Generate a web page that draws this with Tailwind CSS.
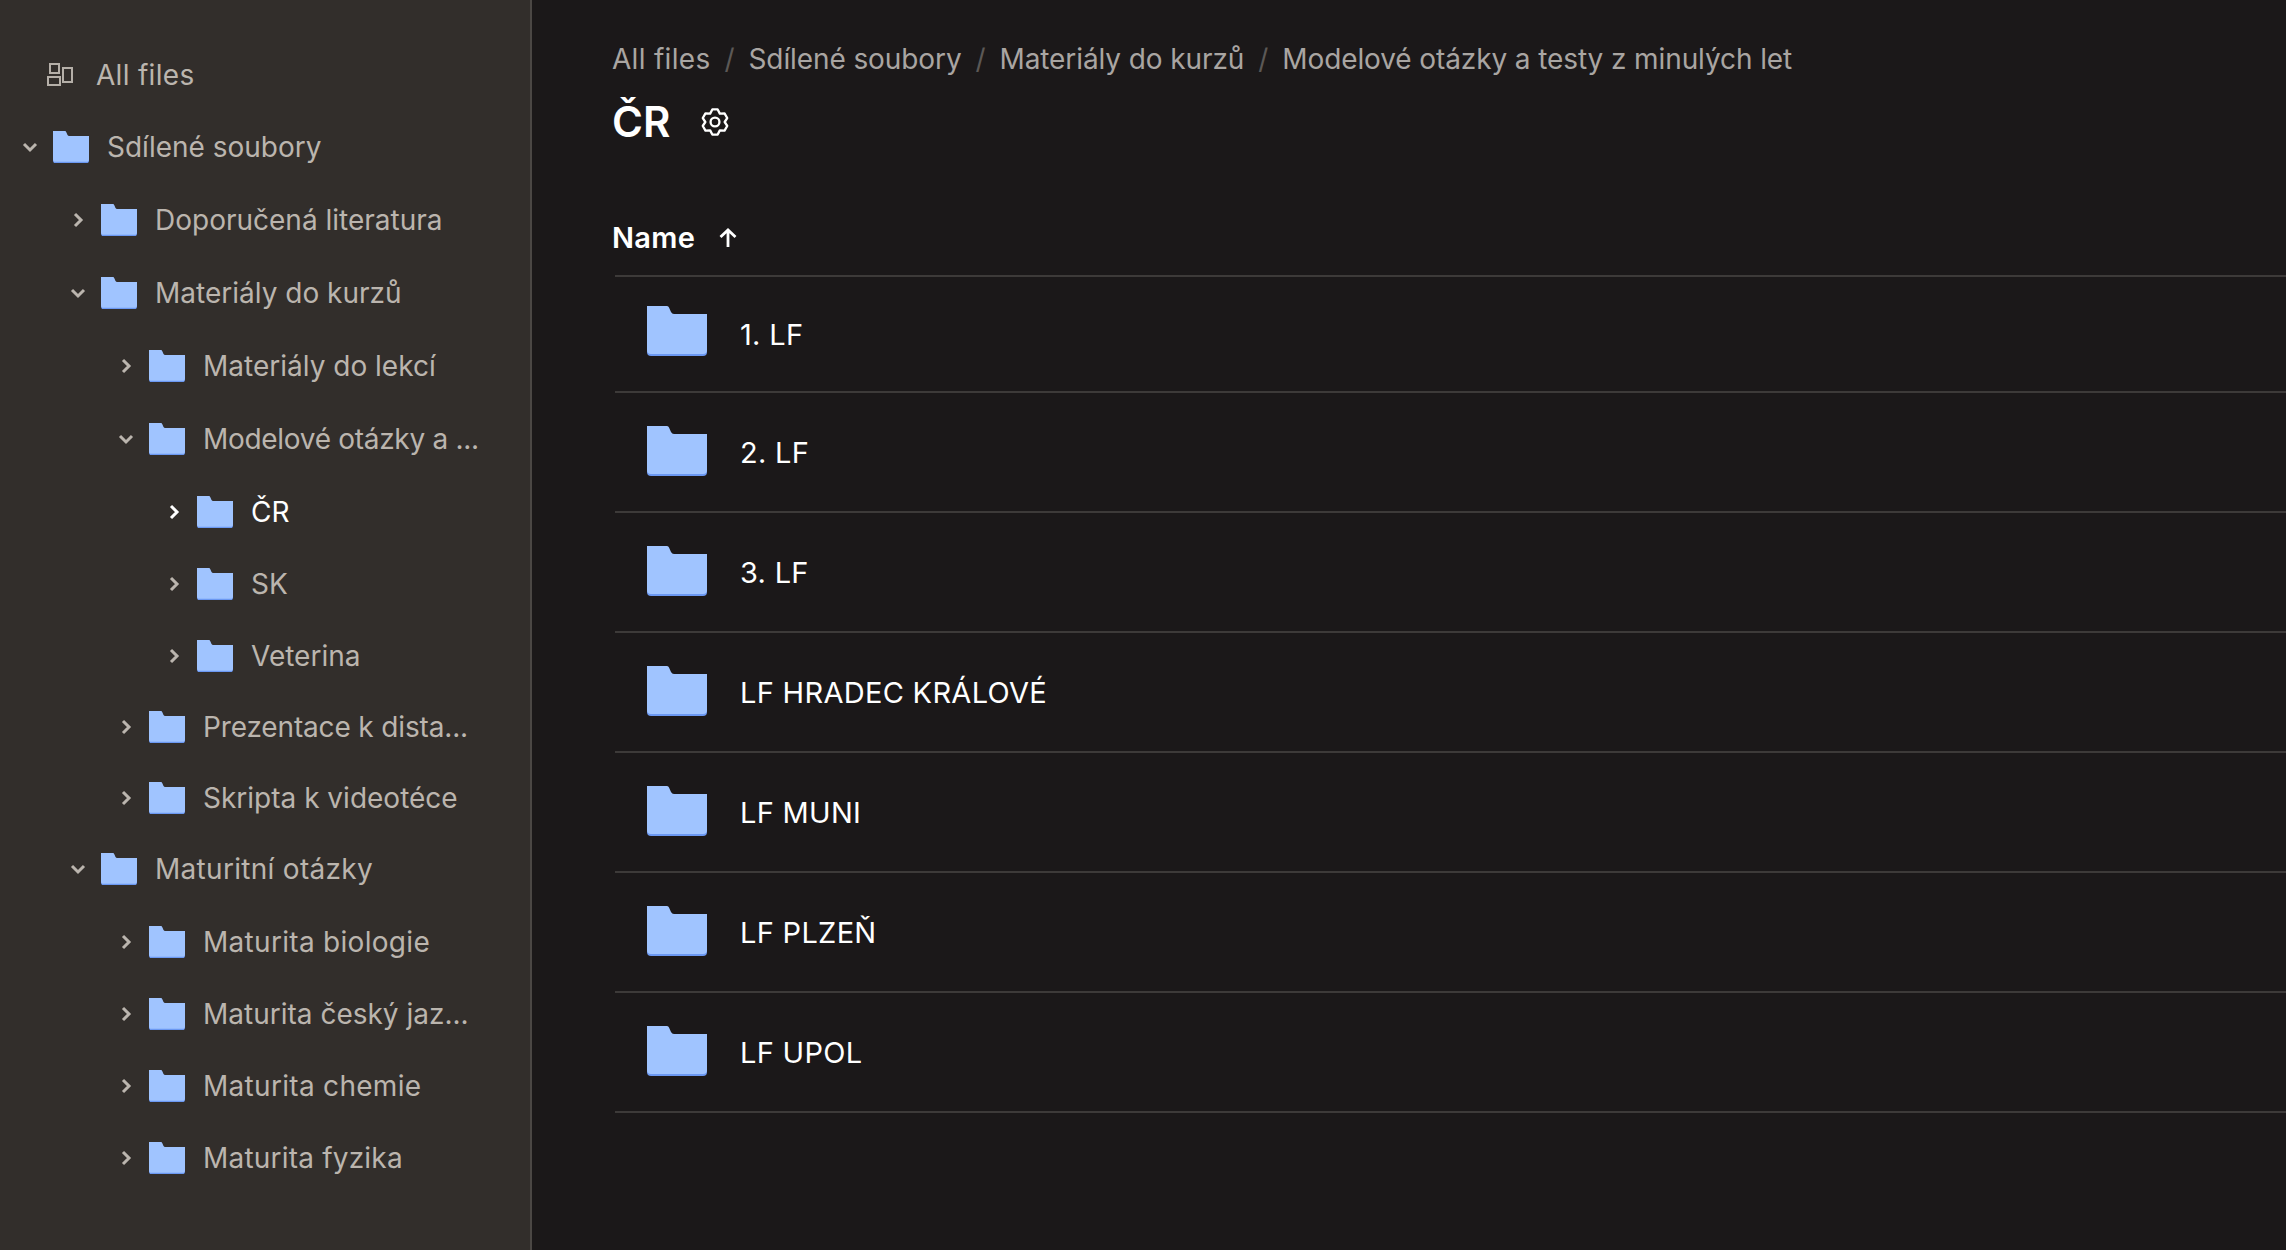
<!DOCTYPE html>
<html lang="en">

<head>
    <meta charset="UTF-8">
    <title>ČR - Dropbox</title>
    <script src="https://cdn.jsdelivr.net/npm/@tailwindcss/browser@4"></script>
</head>

<body class="bg-[#1b1819] font-['Inter',sans-serif] overflow-hidden">
    <!-- shared icons -->
    <svg class="hidden">
        <symbol id="folder" viewBox="0 0 60 50" preserveAspectRatio="none">
            <path fill="#6b98f2" d="M0 30H60V46Q60 50 56 50H4Q0 50 0 46Z" />
            <path fill="#a0c4ff" d="M0 0H20Q21.500 0 22 1.500L24 6Q25 8 27 8H60V44Q60 48 56 48H4Q0 48 0 44Z" />
        </symbol>
        <symbol id="right" viewBox="0 0 14 16">
            <path fill="none" stroke="currentColor" stroke-width="3" d="M4 2L10 8L4 14" />
        </symbol>
        <symbol id="down" viewBox="0 0 16 14">
            <path fill="none" stroke="currentColor" stroke-width="3" d="M2 4L8 10L14 4" />
        </symbol>
    </svg>

    <div class="flex h-[1250px] w-[2286px]">
        <!-- Sidebar -->
        <aside class="w-[532px] shrink-0 bg-[#322e2b] border-r-2 border-[#4b4744] pt-[38px] text-[#bbb5ae] text-[28px]">
            <div class="flex items-center h-[72px] pl-[47px] pt-px">
                <svg class="w-[27px] h-[24px] text-[#b5afa8]" viewBox="0 0 27 24" fill="none" stroke="currentColor" stroke-width="2">
                    <rect x="3" y="1" width="9" height="9" />
                    <rect x="1" y="14" width="12" height="8" />
                    <rect x="16" y="5" width="9" height="14" />
                </svg>
                <span class="ml-[22px] tracking-[0.3px]">All files</span>
            </div>

            <div class="flex items-center h-[73px] pl-[22px]">
                <svg class="w-4 h-[14px]"><use href="#down" /></svg>
                <svg class="w-9 h-8 ml-[15px]"><use href="#folder" /></svg>
                <span class="ml-[18px]">Sdílené soubory</span>
            </div>
            <div class="flex items-center h-[73px] pl-[71px]">
                <svg class="w-[14px] h-4"><use href="#right" /></svg>
                <svg class="w-9 h-8 ml-[16px]"><use href="#folder" /></svg>
                <span class="ml-[18px]">Doporučená literatura</span>
            </div>
            <div class="flex items-center h-[73px] pl-[70px]">
                <svg class="w-4 h-[14px]"><use href="#down" /></svg>
                <svg class="w-9 h-8 ml-[15px]"><use href="#folder" /></svg>
                <span class="ml-[18px]">Materiály do kurzů</span>
            </div>
            <div class="flex items-center h-[73px] pl-[119px]">
                <svg class="w-[14px] h-4"><use href="#right" /></svg>
                <svg class="w-9 h-8 ml-[16px]"><use href="#folder" /></svg>
                <span class="ml-[18px]">Materiály do lekcí</span>
            </div>
            <div class="flex items-center h-[73px] pl-[118px]">
                <svg class="w-4 h-[14px]"><use href="#down" /></svg>
                <svg class="w-9 h-8 ml-[15px]"><use href="#folder" /></svg>
                <span class="ml-[18px] tracking-[-0.3px]">Modelové otázky a ...</span>
            </div>
            <div class="flex items-center h-[73px] pl-[167px] text-white">
                <svg class="w-[14px] h-4"><use href="#right" /></svg>
                <svg class="w-9 h-8 ml-[16px]"><use href="#folder" /></svg>
                <span class="ml-[18px]">ČR</span>
            </div>
            <div class="flex items-center h-[72px] pl-[167px]">
                <svg class="w-[14px] h-4"><use href="#right" /></svg>
                <svg class="w-9 h-8 ml-[16px]"><use href="#folder" /></svg>
                <span class="ml-[18px]">SK</span>
            </div>
            <div class="flex items-center h-[72px] pl-[167px]">
                <svg class="w-[14px] h-4"><use href="#right" /></svg>
                <svg class="w-9 h-8 ml-[16px]"><use href="#folder" /></svg>
                <span class="ml-[18px]">Veterina</span>
            </div>
            <div class="flex items-center h-[70px] pl-[119px]">
                <svg class="w-[14px] h-4"><use href="#right" /></svg>
                <svg class="w-9 h-8 ml-[16px]"><use href="#folder" /></svg>
                <span class="ml-[18px] tracking-[-0.15px]">Prezentace k dista...</span>
            </div>
            <div class="flex items-center h-[71px] pl-[119px]">
                <svg class="w-[14px] h-4"><use href="#right" /></svg>
                <svg class="w-9 h-8 ml-[16px]"><use href="#folder" /></svg>
                <span class="ml-[18px]">Skripta k videotéce</span>
            </div>
            <div class="flex items-center h-[72px] pl-[70px]">
                <svg class="w-4 h-[14px]"><use href="#down" /></svg>
                <svg class="w-9 h-8 ml-[15px]"><use href="#folder" /></svg>
                <span class="ml-[18px] tracking-[0.3px]">Maturitní otázky</span>
            </div>
            <div class="flex items-center h-[73px] pl-[119px]">
                <svg class="w-[14px] h-4"><use href="#right" /></svg>
                <svg class="w-9 h-8 ml-[16px]"><use href="#folder" /></svg>
                <span class="ml-[18px] tracking-[0.3px]">Maturita biologie</span>
            </div>
            <div class="flex items-center h-[72px] pl-[119px]">
                <svg class="w-[14px] h-4"><use href="#right" /></svg>
                <svg class="w-9 h-8 ml-[16px]"><use href="#folder" /></svg>
                <span class="ml-[18px]">Maturita český jaz...</span>
            </div>
            <div class="flex items-center h-[72px] pl-[119px]">
                <svg class="w-[14px] h-4"><use href="#right" /></svg>
                <svg class="w-9 h-8 ml-[16px]"><use href="#folder" /></svg>
                <span class="ml-[18px] tracking-[0.3px]">Maturita chemie</span>
            </div>
            <div class="flex items-center h-[72px] pl-[119px]">
                <svg class="w-[14px] h-4"><use href="#right" /></svg>
                <svg class="w-9 h-8 ml-[16px]"><use href="#folder" /></svg>
                <span class="ml-[18px] tracking-[0.2px]">Maturita fyzika</span>
            </div>
        </aside>

        <!-- Main -->
        <main class="flex-1 pl-[80px] pt-[39px] min-w-0">
            <nav class="flex items-center h-10 text-[28px] tracking-[-0.1px] text-[#a9a5a2] whitespace-nowrap">
                <span class="tracking-[0.3px]">All files</span>
                <span class="mx-[14px] text-[#5c5856]">/</span>
                <span>Sdílené soubory</span>
                <span class="mx-[14px] text-[#5c5856]">/</span>
                <span>Materiály do kurzů</span>
                <span class="mx-[14px] text-[#5c5856]">/</span>
                <span>Modelové otázky a testy z minulých let</span>
            </nav>
            <div class="flex items-center mt-[21px] h-11">
                <h1 class="text-[42px] font-semibold text-white leading-none">ČR</h1>
                <svg class="w-[28px] h-[28px] ml-[31px] text-white" viewBox="0 0 24 24" fill="none" stroke="currentColor" stroke-width="2" stroke-linejoin="round">
                    <circle cx="12" cy="12" r="3.800" />
                    <path d="M9.700 1.240H14.300L16.150 4.810L20.170 4.640L22.460 8.600L20.300 12L22.460 15.400L20.170 19.360L16.150 19.190L14.300 22.760H9.700L7.850 19.190L3.830 19.360L1.540 15.400L3.700 12L1.540 8.600L3.830 4.640L7.850 4.810Z" />
                </svg>
            </div>
            <div class="flex items-center mt-[73px] h-[42px] text-[29px] tracking-[0.3px] font-semibold text-white">
                <span>Name</span>
                <svg class="w-5 h-5 ml-[23px]" viewBox="0 0 20 20" fill="none" stroke="currentColor" stroke-width="2.800">
                    <path d="M10 19V2M2.500 9L10 2L17.500 9" />
                </svg>
            </div>

            <ul class="ml-[3px] border-t-2 border-[#3d3a39] mt-[16px] text-[29px] tracking-[0.3px] text-white">
                <li class="flex items-center h-[116px] pl-[32px] pt-px border-b-2 border-[#3d3a39]">
                    <svg class="w-[60px] h-[50px] -translate-y-[4px]"><use href="#folder" /></svg>
                    <span class="ml-[33px]">1. LF</span>
                </li>
                <li class="flex items-center h-[120px] pl-[32px] pt-px border-b-2 border-[#3d3a39]">
                    <svg class="w-[60px] h-[50px] -translate-y-[2px]"><use href="#folder" /></svg>
                    <span class="ml-[33px]">2. LF</span>
                </li>
                <li class="flex items-center h-[120px] pl-[32px] pt-px border-b-2 border-[#3d3a39]">
                    <svg class="w-[60px] h-[50px] -translate-y-[2px]"><use href="#folder" /></svg>
                    <span class="ml-[33px]">3. LF</span>
                </li>
                <li class="flex items-center h-[120px] pl-[32px] pt-px border-b-2 border-[#3d3a39]">
                    <svg class="w-[60px] h-[50px] -translate-y-[2px]"><use href="#folder" /></svg>
                    <span class="ml-[33px]">LF HRADEC KRÁLOVÉ</span>
                </li>
                <li class="flex items-center h-[120px] pl-[32px] pt-px border-b-2 border-[#3d3a39]">
                    <svg class="w-[60px] h-[50px] -translate-y-[2px]"><use href="#folder" /></svg>
                    <span class="ml-[33px]">LF MUNI</span>
                </li>
                <li class="flex items-center h-[120px] pl-[32px] pt-px border-b-2 border-[#3d3a39]">
                    <svg class="w-[60px] h-[50px] -translate-y-[2px]"><use href="#folder" /></svg>
                    <span class="ml-[33px]">LF PLZEŇ</span>
                </li>
                <li class="flex items-center h-[120px] pl-[32px] pt-px border-b-2 border-[#3d3a39]">
                    <svg class="w-[60px] h-[50px] -translate-y-[2px]"><use href="#folder" /></svg>
                    <span class="ml-[33px]">LF UPOL</span>
                </li>
            </ul>
        </main>
    </div>
</body>

</html>
